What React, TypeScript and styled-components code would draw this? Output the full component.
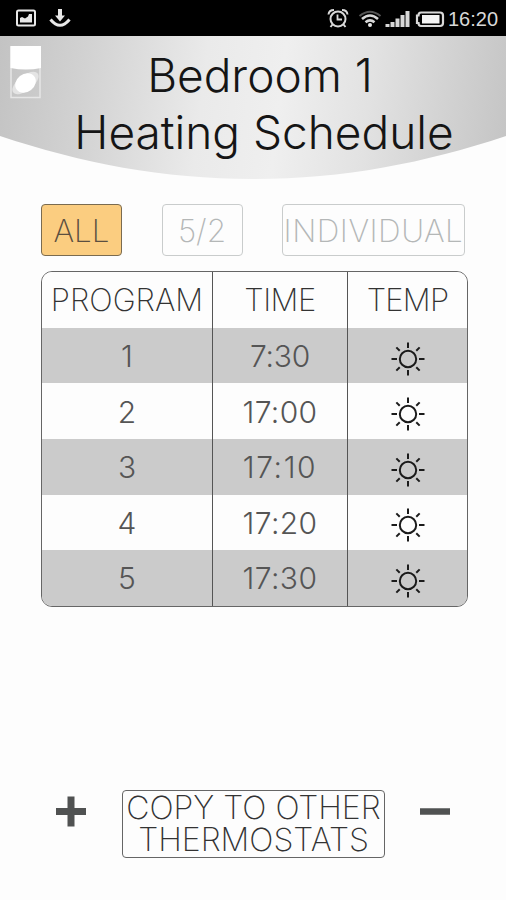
import React from 'react';
import styled, { createGlobalStyle } from 'styled-components';

const GlobalStyle = createGlobalStyle`
  * { box-sizing: border-box; }
  body { margin: 0; background: #fdfdfd; font-family: Inter, "Liberation Sans", sans-serif; font-weight: 300; }
  button { font: inherit; padding: 0; background: none; border: 0; }
`;

const Screen = styled.main`
  width: 506px;
  height: 900px;
  display: flex;
  flex-direction: column;
  overflow: hidden;
`;

const StatusBar = styled.div`
  height: 36px;
  flex: none;
  background: #000;
  display: flex;
  align-items: center;
  justify-content: space-between;
`;

const StatusIcons = styled.svg`
  display: block;
  flex: none;
`;

const StatusRight = styled.div`
  display: flex;
  align-items: center;
  width: 180px;
`;

const Clock = styled.span`
  font: 400 20px/36px "Liberation Sans", sans-serif;
  color: #d8d8d8;
  margin: 2px 0 0 2px;
`;

const Header = styled.header`
  height: 144px;
  flex: none;
  display: flex;
  align-items: flex-start;
  background: linear-gradient(97deg, #c3c3c3 0%, #d2d2d2 17%, #eaeaea 40%, #efefef 55%, #e2e2e2 72%, #c4c4c4 100%);
  clip-path: path('M0 0H506V100C425 127 343 143 253 143S81 127 0 100Z');
`;

const DeviceIcon = styled.svg`
  flex: none;
  margin: 10px 0 0 10px;
`;

const Title = styled.h1`
  margin: 11px 0 0 32px;
  width: 380px;
  font-size: 46px;
  line-height: 57px;
  font-weight: 300;
  color: #151515;
  text-align: center;
  white-space: nowrap;
`;

const TitleLine = styled.span<{ $indent?: number }>`
  display: block;
  padding-right: ${(p) => p.$indent ?? 0}px;
`;

const Modes = styled.nav`
  display: flex;
  gap: 39.5px;
  margin: 24px 0 0 41px;
  height: 52px;
`;

const ModeButton = styled.button<{ $width: number; $active?: boolean; $spacing?: number }>`
  width: ${(p) => p.$width}px;
  height: 52px;
  border: 1.5px solid ${(p) => (p.$active ? '#7a6b50' : '#c9cccc')};
  border-radius: 4px;
  background: ${(p) => (p.$active ? '#fbcd80' : '#fdfdfd')};
  color: ${(p) => (p.$active ? '#5b4f40' : '#b4b7b7')};
  font-size: 31.5px;
  font-weight: 200;
  line-height: 51px;
  letter-spacing: ${(p) => p.$spacing ?? 0}px;
  white-space: nowrap;
`;

const Schedule = styled.div`
  margin: 15px 0 0 41px;
  width: 427px;
  height: 336px;
  border: 1.5px solid #666;
  border-radius: 11px;
  overflow: hidden;
  display: grid;
  grid-template-rows: 55.8px repeat(5, 55.6px);
`;

const Row = styled.div<{ $shaded?: boolean }>`
  display: grid;
  grid-template-columns: 171px 135px 1fr;
  background: ${(p) => (p.$shaded ? '#cbcbcb' : '#fdfdfd')};
`;

const Cell = styled.div<{ $head?: boolean; $spacing?: number }>`
  display: flex;
  align-items: center;
  justify-content: center;
  border-right: 1.5px solid #555;
  color: ${(p) => (p.$head ? '#333' : '#555')};
  font-size: ${(p) => (p.$head ? 31 : 30)}px;
  font-weight: ${(p) => (p.$head ? 200 : 300)};
  letter-spacing: ${(p) => p.$spacing ?? 0}px;
  line-height: 1;
  padding-top: ${(p) => (p.$head ? 0 : 1)}px;
  white-space: nowrap;
  &:last-child { border-right: 0; }
`;

const SunIcon = styled.svg`
  display: block;
  margin-top: 5px;
`;

const Footer = styled.footer`
  margin: 183px 0 0 56px;
  display: flex;
  align-items: flex-start;
`;

const StepButton = styled.button`
  width: 31px;
  height: 31px;
  margin-top: 6px;
  svg { display: block; }
`;

const CopyButton = styled.button`
  width: 263px;
  height: 68px;
  margin: 0 34px 0 35px;
  border: 1.5px solid #666;
  border-radius: 4px;
  color: #333;
  font-size: 32px;
  font-weight: 200;
  line-height: 32.5px;
  white-space: nowrap;
`;

const CopyLine = styled.span`
  display: block;
`;

const Sun = () => (
  <SunIcon width="34" height="34" viewBox="-17 -17 34 34" fill="none" stroke="#1b1b1b" strokeWidth="2">
    <circle r="8.2" />
    {[0, 45, 90, 135, 180, 225, 270, 315].map((a) => (
      <path key={a} d={a % 90 ? 'M11.7 0H16.5' : 'M11 0H16.5'} transform={`rotate(${a})`} />
    ))}
  </SunIcon>
);

const programs = [
  { time: '7:30', spacing: -0.3 },
  { time: '17:00', spacing: 0.4 },
  { time: '17:10', spacing: 1.6 },
  { time: '17:20', spacing: 0.4 },
  { time: '17:30', spacing: 0.4 },
];

export default function App() {
  return (
    <>
      <GlobalStyle />
      <Screen>
        <StatusBar>
          <StatusIcons width="80" height="36" fill="none" stroke="#e8e8e8">
            <rect x="17" y="10.5" width="18" height="15" rx="1.5" strokeWidth="2" />
            <path d="M20 22.5V18L22 17L25 18.500L28 16.500L29 14H32V22.5Z" fill="#e8e8e8" stroke="none" />
            <path d="M60 9V18" strokeWidth="4" />
            <path d="M55 15.5H65L60 21.5Z" fill="#e8e8e8" stroke="none" />
            <path d="M50.5 19.5Q60 31 69.5 19.5" strokeWidth="3" />
          </StatusIcons>
          <StatusRight>
            <StatusIcons width="120" height="36" fill="none" stroke="#d8d8d8">
              <circle cx="12" cy="19" r="7.5" strokeWidth="2" />
              <path d="M11.5 14.5V19.5H16" strokeWidth="1.8" />
              <path d="M2.5 14.5Q3 10 8 10M16 10Q21 10 21.5 14.5M6.5 24.5L4.5 27M17.5 24.5L19.5 27" strokeWidth="2" />
              <path d="M33.5 16Q44 7.5 54.5 16" stroke="#555" strokeWidth="2" />
              <path d="M36 19Q44 12 52 19M39.5 22.3Q44 18.5 48.5 22.3" strokeWidth="2.6" />
              <circle cx="44" cy="25" r="2" fill="#e8e8e8" stroke="none" />
              <path d="M61.5 27V24M66.5 27V22M71.5 27V18.5M76.5 27V15M81.5 27V11" strokeWidth="4" />
              <path d="M95 12.5H114Q117 12.5 117 15.5V23Q117 26 114 26H95Q92.500 26 92.500 23H91V15.5H92.500Q92.500 12.5 95 12.5Z" strokeWidth="2.200" />
              <rect x="96" y="15" width="17.500" height="8.500" fill="#f4f4f4" stroke="none" />
            </StatusIcons>
            <Clock>16:20</Clock>
          </StatusRight>
        </StatusBar>
        <Header>
          <DeviceIcon width="32" height="54" fill="none">
            <rect x="1" y="1" width="29" height="50.5" stroke="#e6e6e6" strokeWidth="1.5" />
            <path d="M.5 0H31V22Q16 25 .5 22Z" fill="#fff" />
            <ellipse cx="15.5" cy="37" rx="15.5" ry="7.5" fill="#e4e4e4" transform="rotate(-38 15.5 37)" />
            <ellipse cx="15.5" cy="37" rx="11" ry="9" fill="#fff" transform="rotate(-38 15.5 37)" />
          </DeviceIcon>
          <Title>
            <TitleLine $indent={8}>Bedroom 1</TitleLine>
            <TitleLine>Heating Schedule</TitleLine>
          </Title>
        </Header>
        <Modes>
          <ModeButton $width={81} $active>ALL</ModeButton>
          <ModeButton $width={81}>5/2</ModeButton>
          <ModeButton $width={183} $spacing={0.5}>INDIVIDUAL</ModeButton>
        </Modes>
        <Schedule>
          <Row>
            <Cell $head>PROGRAM</Cell>
            <Cell $head $spacing={-0.5}>TIME</Cell>
            <Cell $head $spacing={-0.8}>TEMP</Cell>
          </Row>
          {programs.map(({ time, spacing }, i) => (
            <Row key={time} $shaded={i % 2 === 0}>
              <Cell>{i + 1}</Cell>
              <Cell $spacing={spacing}>{time}</Cell>
              <Cell><Sun /></Cell>
            </Row>
          ))}
        </Schedule>
        <Footer>
          <StepButton aria-label="Add program">
            <svg width="31" height="31" stroke="#505252" strokeWidth="7"><path d="M0 15.5H30M15 .5V30.5" /></svg>
          </StepButton>
          <CopyButton>
            <CopyLine>COPY TO OTHER</CopyLine>
            <CopyLine>THERMOSTATS</CopyLine>
          </CopyButton>
          <StepButton aria-label="Remove program">
            <svg width="31" height="31" stroke="#505252" strokeWidth="6.5"><path d="M1 15.5H31" /></svg>
          </StepButton>
        </Footer>
      </Screen>
    </>
  );
}
